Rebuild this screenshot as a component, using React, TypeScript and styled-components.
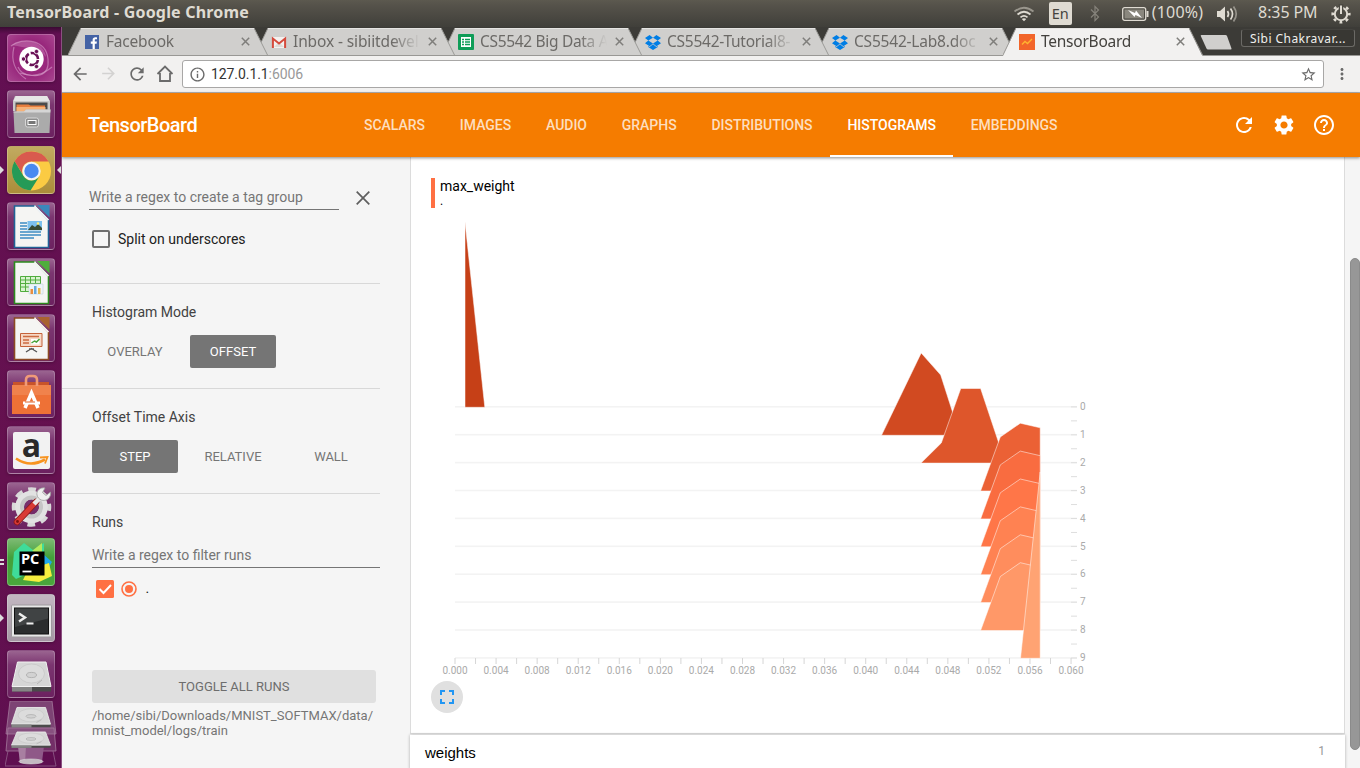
import React from "react";
import styled, { createGlobalStyle, css } from "styled-components";
import {
  MdArrowBack,
  MdArrowForward,
  MdFullscreen,
  MdHelpOutline,
  MdInfoOutline,
  MdMoreVert,
  MdRefresh,
  MdSettings,
  MdStarBorder,
} from "react-icons/md";

const GlobalStyle = createGlobalStyle`
  * { box-sizing: border-box; }
  body { margin: 0; overflow: hidden; font-family: Roboto, sans-serif; }
  svg { display: block; flex: none; }
`;

const Desktop = styled.div`
  width: 1360px;
  height: 768px;
  display: flex;
  flex-direction: column;
  overflow: hidden;
  background: #3c3b37;
`;

/* ---------- system bar ---------- */

const SystemBar = styled.header`
  height: 27px;
  flex: none;
  display: flex;
  align-items: center;
  padding: 0 9px 0 7px;
  background: linear-gradient(#5c594f, #55524a 20%, #403f3a);
  color: #dfdbd2;
  font-family: "Noto Sans", sans-serif;
`;

const WindowTitle = styled.div`
  flex: 1;
  height: 27px;
  font-size: 16px;
  line-height: 25px;
  font-weight: 700;
  letter-spacing: 0.2px;
  white-space: nowrap;
`;

const Indicators = styled.div`
  display: flex;
  align-items: center;
  height: 27px;
  font-size: 16px;
  white-space: nowrap;
`;

const Indicator = styled.div<{ $gap: number; $spacing?: number }>`
  display: flex;
  align-items: center;
  height: 27px;
  margin-left: ${(p) => p.$gap}px;
  letter-spacing: ${(p) => p.$spacing ?? 0}px;
`;

const IndicatorText = styled.span`
  height: 27px;
  line-height: 25px;
`;

const LanguageBadge = styled.div`
  width: 23px;
  height: 23px;
  border-radius: 2px;
  background: #dfdbd2;
  color: #45433d;
  font-size: 14.5px;
  line-height: 23px;
  text-align: center;
`;

const BelowBar = styled.div`
  flex: 1;
  min-height: 0;
  display: flex;
`;

/* ---------- launcher ---------- */

const LauncherBar = styled.nav`
  width: 62px;
  flex: none;
  display: flex;
  flex-direction: column;
  align-items: center;
  gap: 8px;
  padding-top: 7px;
  background: linear-gradient(#3a0a33, #620f52 7px, #65114f 60%, #5f0f50);
  border-right: 1px solid #8b5080;
  overflow: hidden;
`;

const LauncherTile = styled.div<{ $tint?: string }>`
  position: relative;
  width: 48px;
  height: 48px;
  flex: none;
  border-radius: 4px;
  border: 1px solid rgba(255, 255, 255, 0.22);
  background: ${(p) =>
    p.$tint ?? "linear-gradient(#9a6490, #7b3570 30%, #6c2160)"};
  box-shadow: 0 1px 3px rgba(0, 0, 0, 0.25);
  display: flex;
  align-items: center;
  justify-content: center;
`;

const Pip = styled.i<{ $side: "left" | "right" }>`
  position: absolute;
  top: 19px;
  ${(p) => (p.$side === "left" ? "left: -8px" : "right: -7px")};
  border: 4px solid transparent;
  ${(p) =>
    p.$side === "left"
      ? "border-left-color: #ddd; border-right-width: 0;"
      : "border-right-color: #ddd; border-left-width: 0;"}
`;

const DoublePip = styled.i`
  position: absolute;
  left: -8px;
  top: 20px;
  width: 4px;
  height: 6px;
  border: solid #ddd;
  border-width: 2px 0;
`;

const FoldedStack = styled.div`
  margin-top: -5px;
`;

/* ---------- browser ---------- */

const Browser = styled.main`
  flex: 1;
  min-width: 0;
  display: flex;
  flex-direction: column;
`;

const TabStrip = styled.div`
  height: 29px;
  flex: none;
  display: flex;
  padding-left: 6px;
  background: #3c3b37;
  font-family: "Noto Sans", sans-serif;
  box-shadow: inset 0 -1px #999895;
`;

const TabBox = styled.div<{ $order: number }>`
  position: relative;
  z-index: ${(p) => p.$order};
  width: 200px;
  height: 29px;
  flex: none;
  margin-right: -13px;
  padding: 0 18.5px 0 16px;
  display: flex;
  align-items: center;
`;

const TabShape = styled.svg`
  position: absolute;
  left: 0;
  top: 0;
`;

const TabIcon = styled.div`
  position: relative;
  width: 16px;
  height: 16px;
  flex: none;
`;

const TabTitle = styled.div<{ $active?: boolean; $spacing: number }>`
  position: relative;
  flex: 1;
  min-width: 0;
  margin: 0 6px 0 6px;
  overflow: hidden;
  white-space: nowrap;
  height: 29px;
  font-size: 15.5px;
  line-height: 28.5px;
  letter-spacing: ${(p) => p.$spacing}px;
  color: ${(p) => (p.$active ? "#44423e" : "#6c6a67")};
  mask-image: linear-gradient(90deg, #000 calc(100% - 30px), transparent calc(100% - 2px));
`;

const TabClose = styled.svg`
  position: relative;
`;

const NewTab = styled.svg`
  margin: 7px 0 0 9px;
`;

const UserBox = styled.div`
  width: 114px;
  height: 18px;
  margin: 2px 0 0 8px;
  border: 1px solid #6b6a66;
  border-top-color: #44433f;
  border-radius: 3px;
  background: #383733;
  color: #f0f0ee;
  font-size: 12px;
  line-height: 17px;
  letter-spacing: 0.45px;
  text-align: center;
  white-space: nowrap;
`;

const Toolbar = styled.div`
  height: 37px;
  flex: none;
  display: flex;
  align-items: center;
  padding: 0 9px 0 8px;
  background: #f2f1f0;
  border-bottom: 1px solid #b2b0b0;
  color: #6b6b6b;
`;

const NavButtons = styled.div`
  display: flex;
  gap: 9px;
  width: 112px;
`;

const Omnibox = styled.div`
  width: 1142px;
  height: 28px;
  border: 1px solid #a8a7a6;
  border-radius: 3px;
  background: #fff;
  display: flex;
  align-items: center;
  padding: 0 6px 0 5.5px;
  margin-right: 9px;
`;

const Url = styled.div`
  flex: 1;
  margin-left: 5.5px;
  font-size: 14px;
  letter-spacing: -0.08px;
  color: #333;
  span { color: #999; }
`;

/* ---------- page ---------- */

const AppHeader = styled.div`
  position: relative;
  z-index: 20;
  height: 64px;
  flex: none;
  display: flex;
  align-items: stretch;
  padding: 0 24px 0 26px;
  background: #f57c00;
  color: #fff;
  box-shadow: 0 1px 3px rgba(0, 0, 0, 0.45);
`;

const Brand = styled.div`
  width: 258.6px;
  font-size: 20px;
  font-weight: 500;
  line-height: 64px;
  letter-spacing: -0.5px;
`;

const Plugins = styled.div`
  flex: 1;
  display: flex;
`;

const PluginTab = styled.div<{ $selected?: boolean }>`
  padding: 0 17.45px;
  font-size: 14px;
  font-weight: 500;
  line-height: 64px;
  letter-spacing: -0.03px;
  color: ${(p) => (p.$selected ? "#fff" : "#fddebf")};
  box-shadow: ${(p) => (p.$selected ? "inset 0 -2px #fff" : "none")};
`;

const HeaderIcons = styled.div`
  display: flex;
  align-items: center;
  gap: 16px;
`;

const PageBody = styled.div`
  flex: 1;
  min-height: 0;
  display: flex;
  background: #f5f5f5;
`;

const Sidebar = styled.aside`
  width: 348px;
  flex: none;
  display: flex;
  flex-direction: column;
  font-size: 14px;
  color: #424242;
`;

const Section = styled.section<{ $height: number; $top: number }>`
  width: 318px;
  height: ${(p) => p.$height}px;
  flex: none;
  padding: ${(p) => p.$top}px 0 0 30px;
  border-bottom: 1px solid #d8d8d8;
`;

const RunsSection = styled.section`
  width: 318px;
  padding: 19px 0 0 30px;
`;

const TagRow = styled.div`
  display: flex;
  align-items: center;
  margin-left: -3px;
`;

const Field = styled.div<{ $width: number }>`
  width: ${(p) => p.$width}px;
  height: 25px;
  line-height: 24px;
  border-bottom: 1px solid #757575;
  color: #757575;
  white-space: nowrap;
`;

const CloseIcon = styled.svg`
  margin-left: 17px;
  margin-top: 1px;
`;

const CheckRow = styled.div`
  display: flex;
  align-items: center;
  gap: 8px;
  margin-top: 20px;
  color: #212121;
`;

const EmptyBox = styled.span`
  width: 18px;
  height: 18px;
  border: 2px solid #6e6e6e;
  border-radius: 2px;
`;

const Heading = styled.div`
  line-height: 18px;
`;

const ButtonRow = styled.div`
  display: flex;
  gap: 12px;
  margin-top: 14px;
`;

const FilterRow = styled.div`
  margin-top: 12px;
`;

const ModeButton = styled.div<{ $on?: boolean }>`
  width: 86px;
  height: 33px;
  border-radius: 2px;
  font-size: 13px;
  line-height: 33px;
  text-align: center;
  color: #757575;
  ${(p) =>
    p.$on &&
    css`
      background: #757575;
      color: #fff;
    `}
`;

const RunRow = styled.div`
  display: flex;
  align-items: center;
  height: 18px;
  margin: 12px 0 0 4px;
  color: #212121;
`;

const RunName = styled.span`
  margin: -3px 0 0 7.5px;
`;

const ToggleAll = styled.div`
  width: 284px;
  height: 33px;
  margin-top: 72px;
  border-radius: 3px;
  background: #e0e0e0;
  color: #6d6d6d;
  font-size: 13px;
  line-height: 33px;
  text-align: center;
`;

const LogPath = styled.div`
  margin-top: 5px;
  font-size: 13px;
  line-height: 15px;
  color: #757575;
  white-space: nowrap;
`;

const Content = styled.div`
  width: 935px;
  flex: none;
  display: flex;
  flex-direction: column;
`;

const Card = styled.div`
  height: 577px;
  flex: none;
  padding: 21px 0 0 20px;
  background: #fff;
  border: 1px solid #dcdcdc;
  border-top: 0;
`;

const TagHeader = styled.div`
  height: 30px;
  padding-left: 5px;
  border-left: 4px solid #ff7043;
  font-size: 14px;
  line-height: 17px;
  color: #000;
`;

const RunLabel = styled.div`
  font-size: 12px;
  line-height: 12px;
`;

const AxisText = styled.text`
  font-family: Roboto, sans-serif;
  font-size: 10px;
  fill: #aaa;
`;

const ExpandButton = styled.div`
  width: 32px;
  height: 32px;
  border-radius: 50%;
  background: #e0e0e0;
  color: #2196f3;
  display: flex;
  align-items: center;
  justify-content: center;
`;

const GroupBar = styled.div`
  flex: 1;
  display: flex;
  justify-content: space-between;
  margin: 1px 0 0 0;
  padding: 0 20px 0 15px;
  background: #fff;
  box-shadow: 0 0 3px rgba(0, 0, 0, 0.3);
  font-family: "Liberation Sans", sans-serif;
  font-size: 15px;
  line-height: 35px;
  color: #000;
`;

const GroupCount = styled.span`
  font-family: Roboto, sans-serif;
  font-size: 12px;
  line-height: 32px;
  color: #999;
`;

const ScrollTrack = styled.div`
  flex: 1;
  padding: 101px 0 0 5px;
`;

const ScrollThumb = styled.div`
  width: 10px;
  height: 492px;
  border-radius: 5px;
  background: #979797;
  border: 1px solid #8b8b8b;
`;

/* ---------- histogram ---------- */

const ROW = 27.9;
const BASE = 407;
const X0 = 455;
const XSTEP = 41.07;

const late = (row: number) => {
  const d = (row - 3) * ROW;
  return [
    [980.6, 491 + d],
    [1000.3, 437 + d],
    [1020.3, 423.2 + d],
    [1040.2, 427.8 + d],
    [1040.2, 491 + d],
  ];
};

const SHAPES: { fill: string; pts: number[][] }[] = [
  { fill: "#c64017", pts: [[465, 407.3], [465, 222], [484.8, 407.3]] },
  { fill: "#d14a21", pts: [[881.5, 435.3], [921.2, 353], [940.7, 375], [960, 435.3]] },
  {
    fill: "#de562b",
    pts: [[921, 463.1], [941.3, 443], [960.8, 388.5], [980.6, 388.5], [998.8, 443], [1000, 463.1]],
  },
  { fill: "#eb6135", pts: late(3) },
  { fill: "#f96c40", pts: late(4) },
  { fill: "#ff7648", pts: late(5) },
  { fill: "#ff8252", pts: late(6) },
  { fill: "#ff8d5d", pts: late(7) },
  { fill: "#ff9868", pts: late(8) },
  { fill: "#ffa373", pts: [[1020.5, 658.3], [1040.2, 472], [1040.2, 658.3]] },
];

const Histogram = () => (
  <svg width={670} height={473} viewBox="431 208 670 473">
    {Array.from({ length: 10 }, (_, i) => (
      <rect key={i} x={455} y={BASE - 1 + i * ROW} width={622} height={1.6} fill="#f3f3f3" />
    ))}
    {Array.from({ length: 19 }, (_, i) => (
      <rect key={i} x={1071} y={BASE - 0.6 + (i * ROW) / 2} width={6} height={1} fill="#dedede" />
    ))}
    {Array.from({ length: 31 }, (_, i) => (
      <rect key={i} x={X0 - 0.5 + (i * XSTEP) / 2} y={658} width={1} height={6} fill="#d6d6d6" />
    ))}
    {SHAPES.map((s) => (
      <polygon
        key={s.fill}
        points={s.pts.map((p) => p.join(",")).join(" ")}
        fill={s.fill}
        stroke="#fff"
        strokeOpacity={0.5}
      />
    ))}
    {Array.from({ length: 16 }, (_, i) => (
      <AxisText key={i} x={X0 + i * XSTEP} y={674} textAnchor="middle">
        {(i * 0.004).toFixed(3)}
      </AxisText>
    ))}
    {Array.from({ length: 10 }, (_, i) => (
      <AxisText key={i} x={1080} y={BASE + 3 + i * ROW}>
        {i}
      </AxisText>
    ))}
  </svg>
);

/* ---------- tab icons ---------- */

const FacebookIcon = () => (
  <svg width={15} height={16} viewBox="-1 -1 15 16">
    <rect width="14" height="14" fill="#4463a5" />
    <path d="M9.8 14V8.7h1.8l.3-2.1H9.8V5.3c0-.6.2-1 1-1h1.2V2.4c-.2 0-.9-.1-1.6-.1-1.7 0-2.8 1-2.8 2.8v1.5H5.8v2.1h1.8V14z" fill="#fff" />
  </svg>
);

const GmailIcon = () => (
  <svg width={16} height={16} viewBox="0 0 16 16">
    <path d="M1 3h14v11H1z" fill="#f4f1ef" />
    <path d="M3 13l5-5 5 5z" fill="#dedbd8" />
    <path d="M1.900 14V4.500L8 9.500l6.100-5V14" fill="none" stroke="#d54b3d" strokeWidth="2" />
  </svg>
);

const SheetsIcon = () => (
  <svg width={16} height={16} viewBox="0 0 16 16">
    <rect width="16" height="16" rx="1" fill="#0f9d58" />
    <path d="M3 3h10v10H3z" fill="#fff" />
    <path d="M4 5.500h8M4 8h8M4 10.500h8" stroke="#0f9d58" strokeWidth="1.300" />
    <path d="M6.500 4v8" stroke="#fff" />
  </svg>
);

const DropboxIcon = () => (
  <svg width={16} height={16} viewBox="0 0 16 16">
    <path
      d="M4.6 1L0 4l3.300 2.600L8 3.700zM11.400 1L8 3.700l4.700 2.900L16 4zM0 9.200l4.600 3L8 9.400 3.300 6.600zM16 9.200l-3.300-2.600L8 9.400l3.400 2.800zM8 10.200l-3.400 2.700-1.400-.9v1L8 16l4.800-3v-1l-1.400.9z"
      fill="#007ee5"
    />
  </svg>
);

const TensorIcon = () => (
  <svg width={16} height={16} viewBox="0 0 16 16">
    <rect width="16" height="16" fill="#f2652a" />
    <path d="M3 10.500l3-3 2.500 2 4.500-4.500" fill="none" stroke="#ffb330" strokeWidth="1.400" />
  </svg>
);

const TABS = [
  { title: "Facebook", icon: <FacebookIcon />, spacing: -0.2 },
  { title: "Inbox - sibiitdevel", icon: <GmailIcon />, spacing: -0.12 },
  { title: "CS5542 Big Data A", icon: <SheetsIcon />, spacing: -0.32 },
  { title: "CS5542-Tutorial8-", icon: <DropboxIcon />, spacing: -0.25 },
  { title: "CS5542-Lab8.doc", icon: <DropboxIcon />, spacing: -0.2 },
  { title: "TensorBoard", icon: <TensorIcon />, spacing: -0.25, active: true },
];

const BrowserTab = ({ index }: { index: number }) => {
  const tab = TABS[index];
  const fill = tab.active ? "#f2f1f0" : "#d0cfcd";
  const bottom = tab.active ? 29 : 28;
  return (
    <TabBox $order={tab.active ? 10 : 9 - index}>
      <TabShape width={200} height={29} viewBox="0 0 200 29">
        <path d={`M0 ${bottom}L13 1H186L199.5 ${bottom}z`} fill={fill} />
        <path d="M0 28L13 1M186 1L199.5 28" stroke="#9b9a97" strokeWidth="1" />
        <path d="M13 1.5H186" stroke="#e5e4e2" />
      </TabShape>
      <TabIcon>{tab.icon}</TabIcon>
      <TabTitle $active={tab.active} $spacing={tab.spacing}>{tab.title}</TabTitle>
      <TabClose width={9} height={9} viewBox="0 0 9 9">
        <path d="M.8.8l7.400 7.400M8.200.8L.8 8.200" stroke="#7f7e7b" strokeWidth="1.500" />
      </TabClose>
    </TabBox>
  );
};

/* ---------- launcher icons ---------- */

const UbuntuIcon = () => (
  <svg width={46} height={46} viewBox="0 0 46 46">
    <g fill="none" stroke="#dca6cf" strokeOpacity=".55" strokeWidth="1.2">
      <path d="M3 11C14 2 38 4 40 24S26 42 12 38" />
      <path d="M10 32C14 42 30 44 44 32M6 12c-3 12 0 24 12 32" />
    </g>
    <path d="M4 10C16 2 36 6 38 22l-8-8-16-2z" fill="#e7b3da" opacity=".3" />
    <circle cx="23.500" cy="24" r="12.200" fill="#fff" />
    <circle cx="24" cy="24" r="6" fill="none" stroke="#6a1157" strokeWidth="2.600" strokeDasharray="10.600 2" strokeDashoffset="-1" />
    <g fill="#6a1157" stroke="#fff" strokeWidth=".8">
      <circle cx="15.500" cy="24" r="2.200" />
      <circle cx="28.500" cy="16.500" r="2.200" />
      <circle cx="28.500" cy="31.500" r="2.200" />
    </g>
  </svg>
);

const FilesIcon = () => (
  <svg width={46} height={46} viewBox="0 0 46 46">
    <path d="M7 5h32l3 5v10H5V10z" fill="#c9c9c9" />
    <path d="M8 5h31l2.500 5H5.500z" fill="#e6e6e6" />
    <path d="M7.500 11.500h32v9h-32z" fill="#4b4b4b" />
    <path d="M8.500 13.500h12l2 1h14.500V20H8.500z" fill="#e87e3e" />
    <path d="M8.500 16h29v5h-29z" fill="#f6b278" />
    <path d="M5.500 20.500H16l2-2h24.500L41.500 42H6.500z" fill="#ababab" />
    <path d="M5.500 20.500H16l2-2h24.500l-.2 3H5.500z" fill="#d5d5d5" />
    <rect x="17.500" y="27" width="13" height="9" rx="2" fill="#8e8e8e" stroke="#d6d6d6" />
    <rect x="20" y="29.500" width="8" height="4" fill="#777" stroke="#fff" />
  </svg>
);

const ChromeIcon = () => (
  <svg width={46} height={46} viewBox="0 0 46 46">
    <circle cx="23.500" cy="24" r="19.500" fill="#fbcb43" />
    <path d="M6.600 14.200A19.500 19.500 0 0 1 40.600 14.500H23.500A9.500 9.500 0 0 0 14.500 27z" fill="#d95a4e" />
    <path d="M6.600 14.200A19.500 19.500 0 0 0 22.500 43.500L31 30A9.500 9.500 0 0 1 15.500 29z" fill="#259a57" />
    <circle cx="23.500" cy="24" r="9.200" fill="#f3f3f3" />
    <circle cx="23.500" cy="24" r="7.200" fill="#4a89f0" />
  </svg>
);

const DocIcon = ({ color, fold, kind }: { color: string; fold: string; kind: "writer" | "calc" | "impress" }) => (
  <svg width={46} height={46} viewBox="0 0 46 46">
    <path d="M6.500 3h20.500L40.500 17v27.500h-34z" fill="#f5f5f3" stroke={color} strokeWidth="1.600" />
    <path d="M29 2h12.500v12.500z" fill={fold} />
    <path d="M27 2.500v1L40.500 17" fill="none" stroke="#fff" strokeWidth="1.500" />
    {kind === "writer" && (
      <g>
        <path d="M12 20h7M12 23h7M12 26h7M12 29h21M12 32h21M12 35h14" stroke="#3d8cc4" strokeWidth="1.500" />
        <rect x="19.500" y="18" width="14.500" height="9.500" fill="#7cc0ee" />
        <path d="M20 27l4-5 3 2 3-3 4 4v2z" fill="#394b33" />
        <circle cx="30" cy="20.500" r="1.300" fill="#fff17a" />
      </g>
    )}
    {kind === "calc" && (
      <g>
        <path d="M12.500 17.500h20v15h-20z" fill="#d9f3cf" stroke="#51ad3e" />
        <path d="M12.500 21h20M12.500 24.500h20M12.500 28h20M17.500 17.500v15M22.500 17.500v15M27.500 17.500v15" stroke="#51ad3e" />
        <path d="M21 25h14v10H21z" fill="#eef4f8" stroke="#c2d4dd" strokeWidth=".6" />
        <path d="M22.500 35v-5H25v5z" fill="#e98d3f" />
        <path d="M26 35v-8h2.500v8z" fill="#66a8dc" />
        <path d="M30 35v-6h2.500v6z" fill="#e8b64b" />
      </g>
    )}
    {kind === "impress" && (
      <g>
        <path d="M12.500 18.500h21.500v13H12.500z" fill="#f6d8c5" stroke="#c5633a" />
        <path d="M15 21.500h16M15 25h6M15 28h6" stroke="#cc6b42" strokeWidth="1.500" />
        <path d="M23 24h8.500v5.500H23z" fill="#fff" />
        <path d="M23.500 28l3-2 2 1 3-3" fill="none" stroke="#4aa33b" strokeWidth="1.500" />
        <path d="M18 37l5.500-3.500L29 37M21 34h5" fill="none" stroke="#555" strokeWidth="1.400" />
      </g>
    )}
  </svg>
);

const LauncherGlyph = styled.text`
  font-family: "Open Sans", sans-serif;
  font-weight: 700;
`;

const SoftwareIcon = () => (
  <svg width={46} height={46} viewBox="0 0 46 46">
    <path d="M5 11h36v5H5z" fill="#c8532a" />
    <path d="M4 14h39v29H4z" fill="#ee7136" />
    <path d="M4 14h39v10H4z" fill="#f0824c" />
    <path d="M18 15v-6q0-4 4-4h3q4 0 4 4v6" fill="none" stroke="#f09a78" strokeWidth="2.600" />
    <path d="M17 37L23.500 22 30 37" fill="none" stroke="#fff" strokeWidth="3.500" />
    <path d="M15 32h17" stroke="#fff" strokeWidth="3" />
    <path d="M17 31h10" stroke="#e0662f" strokeWidth="1" />
  </svg>
);

const AmazonIcon = () => (
  <svg width={46} height={46} viewBox="0 0 46 46">
    <rect x="5" y="5" width="37" height="37" rx="2" fill="#f2f2f2" />
    <LauncherGlyph x="23.500" y="29.500" fontSize="32" textAnchor="middle" fill="#2a2a2a">a</LauncherGlyph>
    <path d="M8 31.500q14 9.500 29 1" fill="none" stroke="#f79420" strokeWidth="2.600" />
    <path d="M32 30.500l7.500-.5-2.500 6.500" fill="none" stroke="#f79420" strokeWidth="1.800" />
  </svg>
);

const SettingsIcon = () => (
  <svg width={46} height={46} viewBox="0 0 46 46">
    <circle cx="23.500" cy="24" r="17" fill="none" stroke="#d9d9d9" strokeWidth="5.500" strokeDasharray="7.500 5.850" strokeDashoffset="3.700" />
    <circle cx="23.500" cy="24" r="12" fill="none" stroke="#e2e2e2" strokeWidth="8.500" />
    <circle cx="23.500" cy="24" r="9.500" fill="none" stroke="#c6c6c6" strokeWidth="4" />
    <path d="M9 39L28 19" stroke="#8f1b1b" strokeWidth="6.500" strokeLinecap="round" />
    <path d="M9 39L28 19" stroke="#d93a35" strokeWidth="4.800" strokeLinecap="round" />
    <path d="M26 21l7-7" stroke="#e8e8e8" strokeWidth="4.500" />
    <path d="M37 5c-5-1-9 3-8 7 1 5 7 7 11 4 2-2 3-4 2.500-7l-4.500 3.500-3.500-3z" fill="#efefef" stroke="#9c9c9c" strokeWidth=".8" />
    <circle cx="9.500" cy="38.500" r="1.400" fill="#7a1111" />
  </svg>
);

const PyCharmIcon = () => (
  <svg width={46} height={46} viewBox="0 0 46 46">
    <path d="M6 13L16 4l9 7 11-7v12L30 30 8 40 4 36z" fill="#3fdc9a" />
    <path d="M24 12l10-8v12z" fill="#b5ea5c" />
    <path d="M34 14l10 9-6 10z" fill="#21a8ec" />
    <path d="M32 27l9-3 3 13-13 6-16-2 4-8z" fill="#f6ed3e" />
    <path d="M11.500 12.500h25v24h-25z" fill="#000" />
    <LauncherGlyph x="13" y="25" fontSize="14.500" fill="#fff">PC</LauncherGlyph>
    <path d="M14.500 32.500h9" stroke="#fff" strokeWidth="1.800" />
  </svg>
);

const TerminalIcon = () => (
  <svg width={46} height={46} viewBox="0 0 46 46">
    <rect x="3.500" y="10" width="40" height="32" rx="1" fill="#e8e8e8" stroke="#9e9a9e" />
    <rect x="6.500" y="13" width="34" height="26" fill="#2b2d2e" stroke="#111" />
    <path d="M7 13.500h33v10L7 32z" fill="#4a4d4e" opacity=".7" />
    <path d="M11 18.500l6 4-6 4" fill="none" stroke="#eee" strokeWidth="2.400" />
    <path d="M18.500 28.500h7" stroke="#eee" strokeWidth="2" />
  </svg>
);

const Drive = () => (
  <g>
    <path d="M4 35L9.500 11h28.500L43 35v5.500H4z" fill="#4a4a4a" />
    <path d="M9.500 11h28.500l5 24.500H4z" fill="#d6d6d6" stroke="#f2f2f2" />
    <path d="M4 36h20v4.500H4z" fill="#858585" />
    <ellipse cx="23.500" cy="22.500" rx="13" ry="9.500" fill="#dcdcdc" stroke="#c4c4c4" strokeWidth=".7" />
    <ellipse cx="23.500" cy="24" rx="5" ry="2.600" fill="#d2d2d2" stroke="#a8a8a8" strokeWidth=".8" />
    <path d="M29 33l5-4" stroke="#b5b5b5" />
  </g>
);

const DriveIcon = () => (
  <svg width={46} height={46} viewBox="0 0 46 46">
    <Drive />
  </svg>
);

const FoldedIcons = () => (
  <svg width={52} height={66} viewBox="5 701 52 66">
    <path d="M10 701h42l4 33H6z" fill="#7d4374" stroke="#a57a9d" strokeWidth=".8" />
    <g transform="translate(7.500 700) scale(1 .68)"><Drive /></g>
    <path d="M8 728h46l2 23H6z" fill="#9c6c94" fillOpacity=".35" stroke="#a57a9d" strokeWidth=".8" />
    <path d="M18 746h26l-2 16H20z" fill="#8f5988" />
    <path d="M18 746h8l-1 17h-5z" fill="#b999b3" opacity=".6" />
    <ellipse cx="31" cy="761.500" rx="12" ry="2.500" fill="#c4bac2" stroke="#ddd" strokeWidth=".6" />
    <g transform="translate(7.500 726) scale(1 .54)"><Drive /></g>
    <path d="M8 751l-3 15h51l-3-15" fill="none" stroke="#91618a" strokeWidth=".8" />
  </svg>
);

const Launcher = () => (
  <LauncherBar>
    <LauncherTile $tint="radial-gradient(#a32b86, #98277c 55%, #a8458f)"><UbuntuIcon /></LauncherTile>
    <LauncherTile><FilesIcon /></LauncherTile>
    <LauncherTile $tint="linear-gradient(#c2aa60, #ab8d3a)">
      <Pip $side="left" /><ChromeIcon /><Pip $side="right" />
    </LauncherTile>
    <LauncherTile><DocIcon color="#1f6396" fold="#3a87bb" kind="writer" /></LauncherTile>
    <LauncherTile><DocIcon color="#2c8a1e" fold="#4fae3c" kind="calc" /></LauncherTile>
    <LauncherTile><DocIcon color="#8c4a22" fold="#a9622f" kind="impress" /></LauncherTile>
    <LauncherTile><SoftwareIcon /></LauncherTile>
    <LauncherTile><AmazonIcon /></LauncherTile>
    <LauncherTile><SettingsIcon /></LauncherTile>
    <LauncherTile $tint="linear-gradient(#7dba73, #43a03a 40%, #4aa63c)"><DoublePip /><PyCharmIcon /></LauncherTile>
    <LauncherTile $tint="linear-gradient(#c3b8c2, #a597a4)"><Pip $side="left" /><TerminalIcon /></LauncherTile>
    <LauncherTile><DriveIcon /></LauncherTile>
    <FoldedStack><FoldedIcons /></FoldedStack>
  </LauncherBar>
);

/* ---------- system indicators ---------- */

const StatusArea = () => (
  <Indicators>
    <svg width={22} height={16} viewBox="0 0 22 16">
      <g fill="none" stroke="#dfdbd2" strokeWidth="1.700">
        <path d="M1.500 5.500Q11-2 20.500 5.500" opacity=".5" />
        <path d="M4.500 8.500Q11 3 17.500 8.500M7.500 11.300Q11 8.500 14.500 11.300" />
      </g>
      <path d="M8.800 13q2.200-1.500 4.400 0L11 15.300z" fill="#dfdbd2" />
    </svg>
    <Indicator $gap={14}><LanguageBadge>En</LanguageBadge></Indicator>
    <Indicator $gap={18}>
      <svg width={10} height={17} viewBox="0 0 10 17">
        <path d="M1 4.500l7.500 7.500L5 15.500v-14L8.500 5 1 12.500" fill="none" stroke="#85827a" strokeWidth="1.200" />
      </svg>
    </Indicator>
    <Indicator $gap={22}>
      <svg width={27} height={14} viewBox="0 0 27 14">
        <rect x=".7" y=".7" width="23" height="12.600" rx="2" fill="none" stroke="#dfdbd2" strokeWidth="1.300" />
        <rect x="2.500" y="2.500" width="19.500" height="9" fill="#8a877e" />
        <path d="M25.500 4v6" stroke="#dfdbd2" strokeWidth="2" />
        <path d="M6 3l7 3 1-2.500L20 11l-6.500-3-1 2z" fill="#fff" />
      </svg>
    </Indicator>
    <Indicator $gap={3} $spacing={0.15}><IndicatorText>(100%)</IndicatorText></Indicator>
    <Indicator $gap={13}>
      <svg width={23} height={18} viewBox="0 0 23 18">
        <path d="M1 6h3l5-4.500v15L4 12H1z" fill="#dfdbd2" />
        <g fill="none" stroke="#dfdbd2" strokeWidth="1.700">
          <path d="M11.500 6q2 3 0 6M14.500 3.500q4 5.500 0 11" />
          <path d="M17.500 1.500q5.500 7.500 0 15" opacity=".5" />
        </g>
      </svg>
    </Indicator>
    <Indicator $gap={19} $spacing={-0.1}><IndicatorText>8:35 PM</IndicatorText></Indicator>
    <Indicator $gap={13.5}>
      <svg width={20} height={20} viewBox="0 0 20 20">
        <circle cx="10" cy="10" r="6.200" fill="none" stroke="#dfdbd2" strokeWidth="2" />
        <circle cx="10" cy="10" r="8.300" fill="none" stroke="#dfdbd2" strokeWidth="2.600" strokeDasharray="2.800 3.719" strokeDashoffset="1.400" />
        <path d="M10 0v10" stroke="#4b4942" strokeWidth="4.500" />
        <path d="M10 1.500V10" stroke="#dfdbd2" strokeWidth="2" />
      </svg>
    </Indicator>
  </Indicators>
);

const PLUGINS = ["SCALARS", "IMAGES", "AUDIO", "GRAPHS", "DISTRIBUTIONS", "HISTOGRAMS", "EMBEDDINGS"];

export default function App() {
  return (
    <Desktop>
      <GlobalStyle />
      <SystemBar>
        <WindowTitle>TensorBoard - Google Chrome</WindowTitle>
        <StatusArea />
      </SystemBar>
      <BelowBar>
        <Launcher />
        <Browser>
          <TabStrip>
            {TABS.map((t, i) => <BrowserTab key={i} index={i} />)}
            <NewTab width={34} height={17} viewBox="0 0 34 17">
              <path d="M2.500 1h24q1 0 1.500 1l4.500 12.500q.3 1-.8 1H9q-1 0-1.500-1L1.800 2q-.4-1 .7-1z" fill="#d0cfcd" />
            </NewTab>
            <UserBox>Sibi Chakravar...</UserBox>
          </TabStrip>
          <Toolbar>
            <NavButtons>
              <MdArrowBack size={20} />
              <MdArrowForward size={19} color="#d3d2d1" />
              <MdRefresh size={20} />
              <svg width={18} height={19} viewBox="0 0 18 19">
                <path d="M1.500 10L9 2.500l7.500 7.500M4 9v8h10V9" fill="none" stroke="#6b6b6b" strokeWidth="1.800" />
              </svg>
            </NavButtons>
            <Omnibox>
              <MdInfoOutline size={17} />
              <Url>127.0.1.1<span>:6006</span></Url>
              <MdStarBorder size={17} />
            </Omnibox>
            <MdMoreVert size={18} />
          </Toolbar>
          <AppHeader>
            <Brand>TensorBoard</Brand>
            <Plugins>
              {PLUGINS.map((p) => (
                <PluginTab key={p} $selected={p === "HISTOGRAMS"}>{p}</PluginTab>
              ))}
            </Plugins>
            <HeaderIcons>
              <MdRefresh size={24} />
              <MdSettings size={24} />
              <MdHelpOutline size={24} />
            </HeaderIcons>
          </AppHeader>
          <PageBody>
            <Sidebar>
              <Section $height={127} $top={28}>
                <TagRow>
                  <Field $width={250}>Write a regex to create a tag group</Field>
                  <CloseIcon width={14} height={14} viewBox="0 0 14 14">
                    <path d="M.7.7l12.600 12.600M13.300.7L.7 13.300" stroke="#5f5f5f" strokeWidth="1.700" />
                  </CloseIcon>
                </TagRow>
                <CheckRow><EmptyBox />Split on underscores</CheckRow>
              </Section>
              <Section $height={105} $top={19}>
                <Heading>Histogram Mode</Heading>
                <ButtonRow>
                  <ModeButton>OVERLAY</ModeButton>
                  <ModeButton $on>OFFSET</ModeButton>
                </ButtonRow>
              </Section>
              <Section $height={105} $top={19}>
                <Heading>Offset Time Axis</Heading>
                <ButtonRow>
                  <ModeButton $on>STEP</ModeButton>
                  <ModeButton>RELATIVE</ModeButton>
                  <ModeButton>WALL</ModeButton>
                </ButtonRow>
              </Section>
              <RunsSection>
                <Heading>Runs</Heading>
                <FilterRow><Field $width={288}>Write a regex to filter runs</Field></FilterRow>
                <RunRow>
                  <svg width={42} height={18} viewBox="0 0 42 18">
                    <rect width="18" height="18" rx="1.500" fill="#ff7043" />
                    <path d="M3.500 9l4 4 7.500-8" fill="none" stroke="#fff" strokeWidth="2" />
                    <circle cx="33" cy="9" r="7" fill="none" stroke="#ff7043" strokeWidth="1.600" />
                    <circle cx="33" cy="9" r="4" fill="#ff7043" />
                  </svg>
                  <RunName>.</RunName>
                </RunRow>
                <ToggleAll>TOGGLE ALL RUNS</ToggleAll>
                <LogPath>
                  /home/sibi/Downloads/MNIST_SOFTMAX/data/
                  <br />
                  mnist_model/logs/train
                </LogPath>
              </RunsSection>
            </Sidebar>
            <Content>
              <Card>
                <TagHeader>
                  max_weight
                  <RunLabel>.</RunLabel>
                </TagHeader>
                <Histogram />
                <ExpandButton><MdFullscreen size={24} /></ExpandButton>
              </Card>
              <GroupBar>
                weights
                <GroupCount>1</GroupCount>
              </GroupBar>
            </Content>
            <ScrollTrack><ScrollThumb /></ScrollTrack>
          </PageBody>
        </Browser>
      </BelowBar>
    </Desktop>
  );
}
